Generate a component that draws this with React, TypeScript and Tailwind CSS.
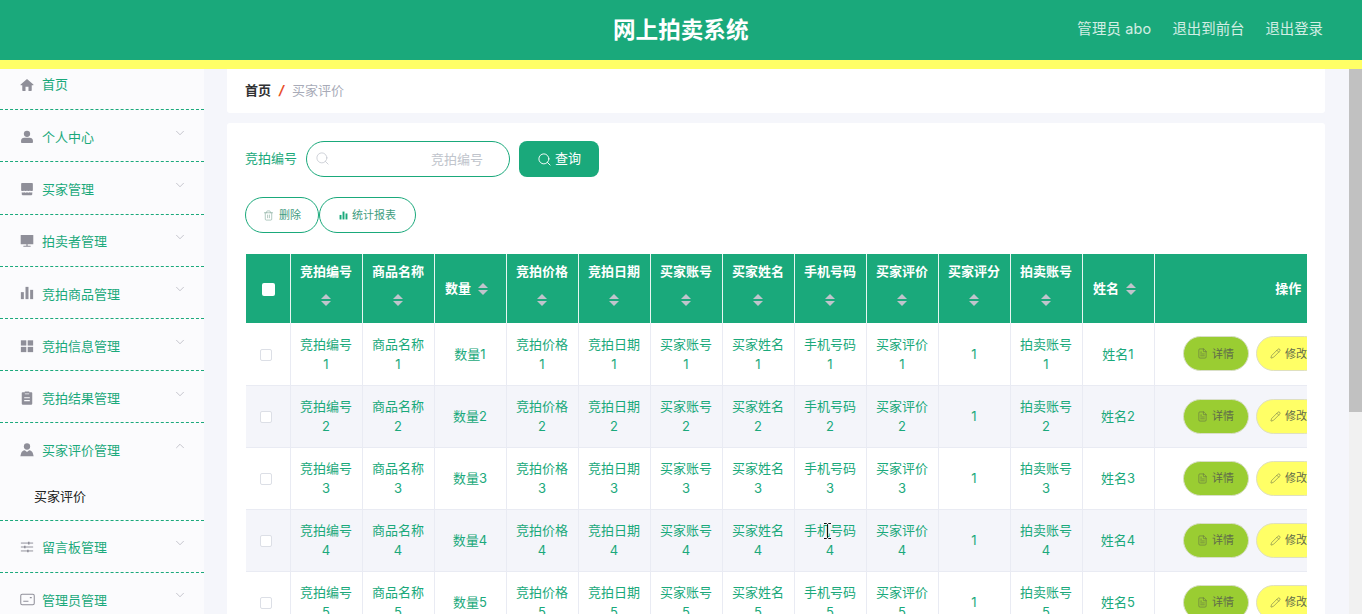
import { Search, Trash2, ChevronDown, ChevronUp, FileText, Pencil } from "lucide-react"
import type { ReactNode } from "react"

const FONT = "font-['Inter','Noto_Sans_CJK_SC',sans-serif]"

// sidebar glyphs, drawn on a 16 box
const glyphs: Record<string, ReactNode> = {
    home: <path d="M8 1 .7 7.500c-.3.3-.1.9.3.9H2.600v5.600c0 .4.3.8.700.8h3V10h3.400v4.800h3c.4 0 .7-.4.700-.8V8.400H15c.4 0 .6-.6.300-.9z" />,
    user: <><circle cx="8" cy="4.400" r="3.600" /><path d="M1.200 12.200c0-2.100 1.700-3.400 3.600-3.400h6.400c1.900 0 3.600 1.300 3.600 3.400v1.800c0 .5-.4.900-.9.900H2.100c-.5 0-.9-.4-.9-.9z" /></>,
    shop: <><path d="M2.200 1h11.600c.5 0 .9.400.9.900v7.700c-.900 1.100-2.400 1.100-3.350 0-.9 1.100-2.400 1.100-3.350 0-.9 1.100-2.400 1.100-3.350 0-.9 1.100-2.400 1.100-3.350 0V1.900c0-.5.4-.9.900-.9z" /><path d="M2 11.800c1 .5 2 .4 3-.1.9.6 2 .6 3 0 1 .6 2.100.6 3 0 1 .5 2 .6 3 .1v2.200c0 .5-.4 1-1 1H3c-.6 0-1-.5-1-1z" /></>,
    monitor: <><rect x=".8" y="1" width="14.400" height="10.600" rx=".6" /><rect x="7.200" y="11.600" width="1.600" height="2" /><rect x="3.800" y="13.500" width="8.400" height="1.200" rx=".3" /></>,
    bars: <><rect x="1" y="7" width="3.400" height="8" /><rect x="6.300" y="1" width="3.400" height="14" /><rect x="11.600" y="4.400" width="3.400" height="10.600" /></>,
    grid: <><rect x="1" y="1.500" width="6.200" height="6" /><rect x="8.800" y="1.500" width="6.200" height="6" /><rect x="1" y="9" width="6.200" height="6" /><rect x="8.800" y="9" width="6.200" height="6" /></>,
    clip: <path fillRule="evenodd" d="M5.500 1.400V.5h5v.9h2.600c.5 0 .9.400.9.900v12.400c0 .5-.4.900-.9.900H2.900c-.5 0-.9-.4-.9-.9V2.300c0-.5.4-.9.900-.9zm0 1.500v.9h5v-.9zM4.800 7v1.200h6.400V7zm0 3.400v1.200h6.400v-1.200z" />,
    person: <><circle cx="8" cy="4" r="3.600" /><path d="M5.500 8.300 8 10.400l2.500-2.100c2.200.3 3.500 1.300 4.200 3.500l.9 3.200H.4l.9-3.200c.7-2.200 2-3.200 4.200-3.500z" /></>,
}

function SideIcon({ name }: { name: string }) {
    if (name === "sliders") {
        return (
            <svg viewBox="0 0 16 16" className="w-[14px] h-[14px]" fill="none" stroke="currentColor" strokeWidth="1.100">
                <path d="M1 3.500h14M1 8h14M1 12.500h14" />
                <path d="M10 2v3M5.500 6.500v3M9 11v3" strokeWidth="1.800" />
            </svg>
        )
    }
    if (name === "card") {
        return (
            <svg viewBox="0 0 16 16" className="w-[15px] h-[15px] shrink-0" fill="none" stroke="currentColor" strokeWidth="1.100">
                <rect x=".8" y="2.500" width="14.400" height="11" rx="1.500" />
                <path d="M3.500 9.800h5.500M10.500 6h2" />
            </svg>
        )
    }
    return (
        <svg viewBox="0 0 16 16" className="w-[14px] h-[14px]" fill="currentColor">
            {glyphs[name]}
        </svg>
    )
}

const menu = [
    { label: "首页", icon: "home", leaf: true },
    { label: "个人中心", icon: "user" },
    { label: "买家管理", icon: "shop" },
    { label: "拍卖者管理", icon: "monitor" },
    { label: "竞拍商品管理", icon: "bars" },
    { label: "竞拍信息管理", icon: "grid" },
    { label: "竞拍结果管理", icon: "clip" },
    { label: "买家评价管理", icon: "person", open: true },
    { label: "留言板管理", icon: "sliders" },
    { label: "管理员管理", icon: "card" },
]

const columns = ["竞拍编号", "商品名称", "数量", "竞拍价格", "竞拍日期", "买家账号", "买家姓名", "手机号码", "买家评价", "买家评分", "拍卖账号", "姓名"]

function Carets() {
    return (
        <span className="inline-flex flex-col items-center justify-center align-middle h-[34px] w-[24px] gap-[2px]">
            <span className="w-0 h-0 border-x-[5px] border-x-transparent border-b-[5px] border-b-[#c0c4cc]" />
            <span className="w-0 h-0 border-x-[5px] border-x-transparent border-t-[5px] border-t-[#c0c4cc]" />
        </span>
    )
}

function cellText(col: string, i: number) {
    if (col === "买家评分") return "1"
    return `${col}${i}`
}

export default function App() {
    return (
        <div className={`h-screen flex flex-col overflow-hidden bg-[#f5f6fb] ${FONT}`}>
            {/* Top bar */}
            <header className="h-[69px] shrink-0 bg-[#1aa97b] border-b-[9px] border-[#ffff66] relative flex items-center justify-end pr-[39px] pb-[3px] gap-[21px] text-[14.400px] text-white/80">
                <h1 className="absolute left-[613px] top-[13px] text-[22.600px] leading-[34px] font-bold text-white">网上拍卖系统</h1>
                <span className="tracking-[.2px]">管理员 abo</span>
                <span>退出到前台</span>
                <span>退出登录</span>
            </header>

            <div className="flex-1 flex min-h-0">
                {/* Sidebar */}
                <aside className="w-[204px] shrink-0 bg-[#fbfbfd] overflow-hidden">
                    <ul className="-mt-[11px] text-[13px] text-[#1aa97b]">
                        {menu.map((item) => (
                            <li key={item.label} className="border-b border-dashed border-[#1aa97b]">
                                <div className="h-[51.200px] pl-[20px] pr-[17px] flex items-center gap-[8px]">
                                    <span className="w-[14px] flex justify-center text-[#8f8f99] translate-y-[1px]">
                                        <SideIcon name={item.icon} />
                                    </span>
                                    <span className={`flex-1 ${item.leaf ? "translate-y-[1px]" : "translate-y-[2px]"}`}>{item.label}</span>
                                    {!item.leaf && (item.open
                                        ? <ChevronUp className="w-[14px] h-[14px] text-[#a8a8b2] -translate-y-[3px]" strokeWidth={1.100} />
                                        : <ChevronDown className="w-[14px] h-[14px] text-[#a8a8b2] -translate-y-[3px]" strokeWidth={1.100} />)}
                                </div>
                                {item.open && (
                                    <div className="h-[45px] pl-[34px] pb-[1px] flex items-center text-[#222]">买家评价</div>
                                )}
                            </li>
                        ))}
                    </ul>
                </aside>

                {/* Main */}
                <main className="flex-1 min-w-0 pl-[23px] pr-[24px]">
                    <div className="h-[44px] bg-white rounded-b-[3px] flex items-center pl-[18px] text-[13px]">
                        <span className="font-bold text-[#303133]">首页</span>
                        <span className="mx-[8px] font-bold italic text-[#e8502a]">/</span>
                        <span className="text-[#a8abb8]">买家评价</span>
                    </div>

                    <section className="mt-[10px] bg-white rounded-[3px] pt-[18px] pl-[18px] pr-[18px]">
                        {/* Search */}
                        <div className="flex items-center h-[36px] text-[13px]">
                            <span className="w-[61px] text-[#1aa97b]">竞拍编号</span>
                            <div className="relative w-[204px] h-[36px]">
                                <Search className="absolute left-[9px] top-[10px] w-[15px] h-[15px] text-[#c0c4cc]" strokeWidth={1.200} />
                                <input
                                    placeholder="竞拍编号"
                                    className="w-full h-full rounded-[18px] border border-[#1aa97b] bg-white pl-[98px] text-center outline-none placeholder:text-[#c0c4cc]"
                                />
                            </div>
                            <button className="ml-[9px] w-[80px] h-[36px] rounded-[8px] bg-[#1aa97b] text-white flex items-center justify-center gap-[3px]">
                                <Search className="w-[15px] h-[15px]" strokeWidth={1.500} />
                                查询
                            </button>
                        </div>

                        {/* Actions */}
                        <div className="mt-[20px] flex h-[36px] text-[11px] text-[#3f9d80]">
                            <button className="w-[74px] rounded-[18px] border border-[#1aa97b] flex items-center justify-center gap-[5px]">
                                <Trash2 className="w-[11px] h-[11px] text-[#7fa898]" strokeWidth={1.300} />
                                删除
                            </button>
                            <button className="w-[97px] rounded-[18px] border border-[#1aa97b] flex items-center justify-center gap-[4px]">
                                <svg viewBox="0 0 16 16" className="w-[9px] h-[9px] text-[#1aa97b]" fill="currentColor">{glyphs.bars}</svg>
                                统计报表
                            </button>
                        </div>

                        {/* Table */}
                        <div className="mt-[21px] ml-px w-[1061px] overflow-hidden">
                            <table className="table-fixed border-collapse w-[1176px] text-[13px] text-center">
                                <colgroup>
                                    <col className="w-[44px]" />
                                    {columns.map((c) => <col key={c} className="w-[72px]" />)}
                                    <col className="w-[268px]" />
                                </colgroup>
                                <thead>
                                    <tr className="h-[69px] bg-[#1aa97b] text-white font-bold">
                                        <th className="border-r border-white/90">
                                            <span className="inline-block w-[13px] h-[13px] ml-[1px] rounded-[2px] bg-white align-middle" />
                                        </th>
                                        {columns.map((c) => (
                                            <th key={c} className="border-r border-white/90 px-[8px] leading-[23px]">
                                                {c}<Carets />
                                            </th>
                                        ))}
                                        <th>操作</th>
                                    </tr>
                                </thead>
                                <tbody className="text-[#1aa97b] leading-[20px]">
                                    {[1, 2, 3, 4, 5].map((i) => (
                                        <tr key={i} className={`h-[62px] ${i % 2 === 0 ? "bg-[#f4f5fa]" : "bg-white"}`}>
                                            <td className="border-r border-b border-[#e9ebf3] text-center">
                                                <span className="inline-block w-[12px] h-[12px] -ml-[3px] rounded-[2px] border border-[#dcdfe6] bg-white align-middle" />
                                            </td>
                                            {columns.map((c) => (
                                                <td key={c} className="border-r border-b border-[#e9ebf3] px-[8px]">{cellText(c, i)}</td>
                                            ))}
                                            <td className="border-b border-[#e9ebf3] text-[11px] text-[#5f6b4a] whitespace-nowrap">
                                                <div className="flex pl-[28px] gap-[7px]">
                                                    <button className="w-[66px] h-[35px] shrink-0 rounded-full bg-[#9acd32] border border-[#d9dfc8] flex items-center justify-center gap-[4px]">
                                                        <FileText className="w-[11px] h-[11px]" strokeWidth={1.200} />
                                                        详情
                                                    </button>
                                                    <button className="w-[66px] h-[35px] shrink-0 rounded-full bg-[#ffff66] border border-[#dfe0c0] flex items-center justify-center gap-[4px]">
                                                        <Pencil className="w-[11px] h-[11px]" strokeWidth={1.200} />
                                                        修改
                                                    </button>
                                                </div>
                                            </td>
                                        </tr>
                                    ))}
                                </tbody>
                            </table>
                        </div>
                    </section>
                </main>

                {/* Page scrollbar */}
                <div className="w-[13px] shrink-0 bg-[#f1f1f1]">
                    <div className="h-[343px] bg-[#c1c1c1]" />
                </div>
            </div>

            {/* mouse pointer caught in the shot */}
            <svg viewBox="0 0 9 16" className="absolute left-[823px] top-[523px] w-[9px] h-[16px]" fill="none" stroke="#111" strokeWidth="1">
                <path d="M1 .5h2.500l1 1 1-1H8M4.500 1.500v13M1 15.500h2.500l1-1 1 1H8" />
            </svg>
        </div>
    )
}
